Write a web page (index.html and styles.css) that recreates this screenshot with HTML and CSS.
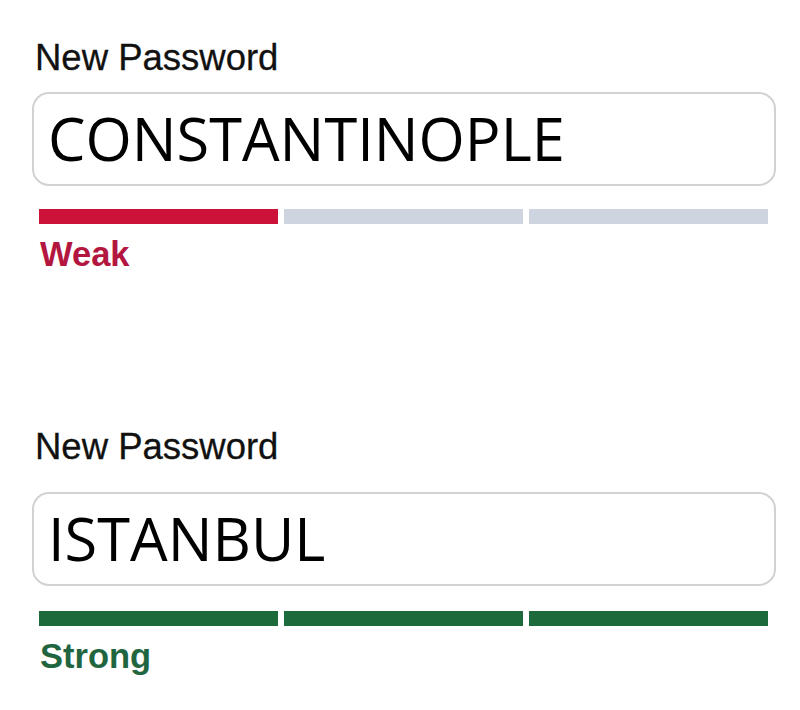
FILE: index.html
```html
<!DOCTYPE html>
<html lang="en">
<head>
<meta charset="utf-8">
<title>New Password</title>
<link rel="stylesheet" href="styles.css">
</head>
<body>
<div class="page">
  <section class="field field-weak">
    <div class="label">New Password</div>
    <div class="input">CONSTANTINOPLE</div>
    <div class="meter">
      <span class="seg on"></span>
      <span class="seg"></span>
      <span class="seg"></span>
    </div>
    <div class="status">Weak</div>
  </section>
  <section class="field field-strong">
    <div class="label">New Password</div>
    <div class="input">ISTANBUL</div>
    <div class="meter">
      <span class="seg on"></span>
      <span class="seg on"></span>
      <span class="seg on"></span>
    </div>
    <div class="status">Strong</div>
  </section>
</div>
</body>
</html>
```
FILE: styles.css
```css
html, body {
  margin: 0;
  padding: 0;
  background: #ffffff;
}
.page {
  width: 800px;
  height: 710px;
  padding: 40px 0 0 32px;
  box-sizing: border-box;
}
.field {
  width: 744px;
}
.field-strong {
  margin-top: 157px;
}
.label {
  font-family: "Liberation Sans", Arial, sans-serif;
  font-size: 36.5px;
  line-height: 36px;
  color: #111111;
  margin-left: 3px;
  -webkit-text-stroke: 0.3px #111111;
}
.input {
  margin-top: 16px;
  height: 94px;
  box-sizing: border-box;
  border: 2px solid #d2d2d2;
  border-radius: 17px;
  padding-left: 14px;
  font-family: "Open Sans", "Noto Sans", sans-serif;
  font-size: 59.5px;
  line-height: 87px;
  color: #000000;
}
.field-strong .input {
  margin-top: 27px;
}
.meter {
  display: flex;
  gap: 6px;
  margin: 23px 8px 0 7px;
}
.field-strong .meter {
  margin-top: 25px;
}
.seg {
  flex: 1;
  height: 15px;
  background: #cfd5e0;
}
.field-weak .seg.on {
  background: #cc1238;
}
.field-strong .seg.on {
  background: #1d6b3c;
}
.status {
  font-family: "Liberation Sans", Arial, sans-serif;
  font-weight: bold;
  font-size: 34.5px;
  line-height: 36px;
  margin: 12px 0 0 8px;
}
.field-weak .status {
  color: #b3173f;
}
.field-strong .status {
  color: #1f6640;
}
```
